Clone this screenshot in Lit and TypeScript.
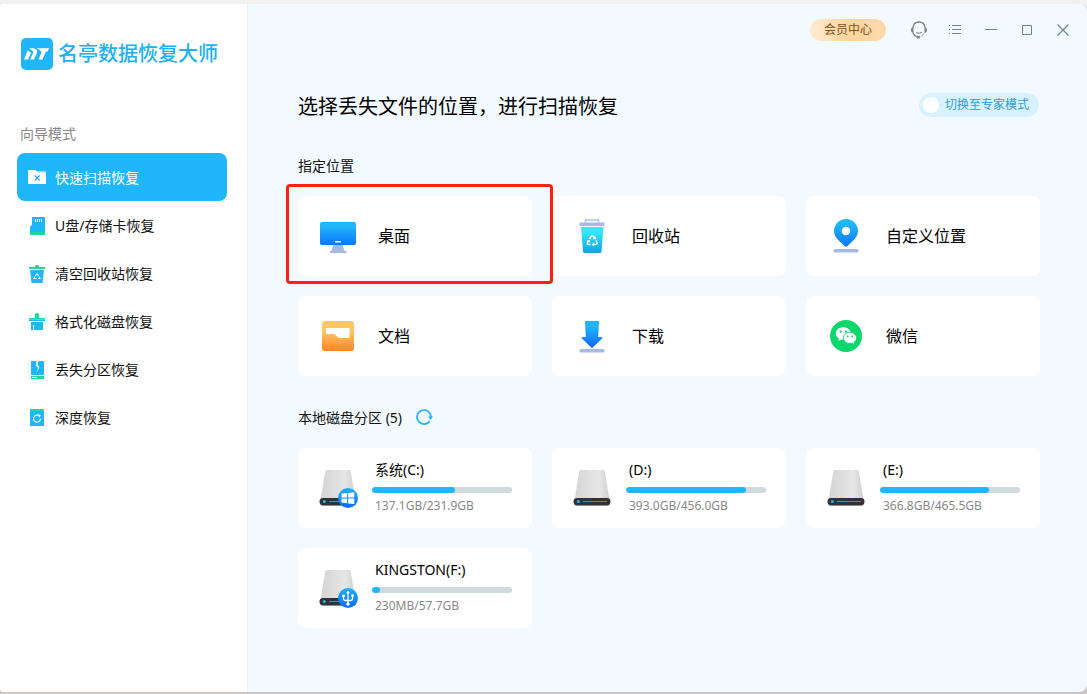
import { LitElement, html, svg, css, nothing } from "lit";
import { customElement, property, state } from "lit/decorators.js";

const logoIcon = html`
  <svg width="32" height="32" viewBox="0 0 32 32" aria-hidden="true">
    <rect width="32" height="32" rx="5" fill="#20b6fc" />
    <path d="M22 22.500L25.500 14H27.800L29 11.300L28.300 10.300L20 14Z" fill="#1590d2" opacity="0.500" />
    <g fill="#fff">
      <path d="M3 21.600L6.800 12.300L10 15L7 21.600Z" />
      <path d="M8 10.300H12.500Q17.200 11.500 15.800 15.300L13 21.600H9.200L12.300 14.600Q12.300 12.600 8 10.300Z" />
      <path d="M15.500 10.300H28.300L26.500 13.800H24.800L21.500 21.600H17.500L20.600 14.300Q19.500 12 15.500 10.300Z" />
    </g>
  </svg>
`;

const navIcons = {
  scan: svg`
    <path d="M9 3h10v4H9z" fill="#8fdafe" />
    <path d="M1 2h7.500l2 2.500H19V16H1z" fill="#fff" />
    <path d="M7.700 7.500l5 5M12.700 7.500l-5 5" stroke="#20a6ee" stroke-width="1.100" />`,
  card: svg`
    <path d="M5 1h12.500a.5.5 0 0 1 .5.5V16H3v-5.500L5 9z" fill="#20b6fc" />
    <path d="M3 16h15v3H3z" fill="#22d69a" />
    <path d="M8.500 3v3M10.500 3v3M12.500 3v3M14.500 3v3" stroke="#fff" stroke-width="1" />`,
  trash: svg`
    <path d="M2 3h6V2q0-1 2-1t2 1v1h6v2H2z" fill="#22d69a" />
    <path d="M3 6h14l-1.500 13h-11z" fill="#20b6fc" />
    <path d="M8.500 12L10 9.700L11.500 12M12.200 12.700L13 14.500H11M9.500 14.500H7L8 12.500" fill="none" stroke="#fff" stroke-width="1.100" />`,
  brush: svg`
    <path d="M8 6V2.500Q8 1 10 1t2 1.500V6h6v1.500H2V6z" fill="#22d69a" />
    <path d="M2 7.500h16V9H2z" fill="#20b6fc" />
    <path d="M4 10h12v8H7v-5H6v5H4z" fill="#20b6fc" />`,
  partition: svg`
    <path d="M4 1h13v14H4z" fill="#20b6fc" />
    <path d="M9.500 1L8.700 5.500L11 7.500L9.800 12.500L12.300 7L10.500 5L11.500 1z" fill="#fff" />
    <path d="M4 16h13v3H4z" fill="#22d69a" />
    <path d="M5 17h5v1H5z" fill="#fff" />`,
  deep: svg`
    <path d="M3 1h14v2H3z" fill="#22d69a" />
    <path d="M3 3h14v15H3z" fill="#20b6fc" />
    <path d="M11.500 7.500A3.500 3.500 0 1 0 13.500 10.800" fill="none" stroke="#fff" stroke-width="1.200" />
    <path d="M11 6L14 7.500L12 9.800z" fill="#fff" />`,
};

const placeIcons = {
  desktop: svg`
    <defs><linearGradient id="g" x2="0" y2="1"><stop offset="0.200" stop-color="#20b6f8" /><stop offset="1" stop-color="#0d74ff" /></linearGradient></defs>
    <path d="M13.500 27h9l2 6h2v2H10v-2h1.500z" fill="#a5b9e2" />
    <rect y="4" width="36" height="23" rx="2" fill="url(#g)" />
    <path d="M15 23h6v1.500h-6z" fill="#fff" />`,
  recycle: svg`
    <defs><linearGradient id="g" x2="0" y2="1"><stop offset="0.200" stop-color="#33e8f8" /><stop offset="1" stop-color="#119fe0" /></linearGradient></defs>
    <path d="M11.500 4.500V2h13v2.500" fill="none" stroke="#b0c1e7" stroke-width="1.600" />
    <rect x="5.500" y="4.500" width="25" height="3.500" rx="1" fill="#a5b9e2" />
    <path d="M7 9h22.500l-2 24.500q-.1 1.500-1.500 1.500H10.500q-1.400 0-1.500-1.500z" fill="url(#g)" />
    <g fill="none" stroke="#fff" stroke-width="1.600" stroke-linejoin="round">
      <path d="M15.500 21L17 18.500Q18.300 17.300 19.600 18.500L20.800 20.800" />
      <path d="M22 22.500L23 24.500Q23.300 26.500 21 26.500H19" />
      <path d="M16.500 26.500H15Q12.800 26.500 13.500 24.500L14.800 22.500" />
    </g>
    <path d="M19.200 21.300h3l-.4-2.700zM19.800 24.600v3.800l-2-1.900zM12.700 22.500l2.900-.6.4 2.700z" fill="#fff" />`,
  pin: svg`
    <defs><linearGradient id="g" x2="0" y2="1"><stop offset="0.200" stop-color="#20b6f8" /><stop offset="1" stop-color="#0d74ff" /></linearGradient></defs>
    <path d="M18 1a12 12 0 0 1 12 12c0 6-5 9.500-10.500 15q-1.500 1.300-3 0C11 22.500 6 19 6 13A12 12 0 0 1 18 1z" fill="url(#g)" />
    <circle cx="18" cy="13" r="4.300" fill="#fff" />
    <rect x="5.500" y="31" width="25" height="3.500" rx="1.500" fill="#a5b9e2" />`,
  documents: svg`
    <defs><linearGradient id="g" x2="0" y2="1"><stop offset="0.350" stop-color="#ffc668" /><stop offset="1" stop-color="#fb861e" /></linearGradient></defs>
    <rect x="2" y="3" width="32" height="30" rx="3" fill="url(#g)" />
    <path d="M7 10h21.500q1 0 1 1v9H19.500q-1 0-2-1l-3-3H6v-5q0-1 1-1z" fill="#fff" />`,
  download: svg`
    <defs><linearGradient id="g" x2="0" y2="1"><stop offset="0.200" stop-color="#20b6f8" /><stop offset="1" stop-color="#0d66ff" /></linearGradient></defs>
    <path d="M12 3h12q1 0 1 1l-.8 15H28l.3 1.200L19 29.300q-1 1-2 0L7.700 20.200L8 19h3.800L11 4q0-1 1-1z" fill="url(#g)" />
    <rect x="5.500" y="31" width="25" height="3.500" rx="1.500" fill="#a5b9e2" />`,
  wechat: svg`
    <circle cx="18" cy="18" r="16" fill="#0bd76b" />
    <path d="M15.300 9.300c4.200 0 7.600 2.700 7.600 6.200s-3.400 6.200-7.600 6.200q-1.200 0-2.300-.3l-2.700 1.500.7-2.400C9 19.400 7.700 17.600 7.700 15.500c0-3.500 3.400-6.200 7.600-6.200z" fill="#fff" />
    <path d="M21.900 14.300c3.700 0 6.600 2.500 6.600 5.600 0 1.800-1 3.300-2.500 4.400l.5 2.100-2.400-1.200q-1 .3-2.200.3c-3.700 0-6.600-2.500-6.600-5.600s2.900-5.600 6.600-5.600z" fill="#fff" stroke="#0bd76b" stroke-width="0.900" />
    <g fill="#0bd76b"><circle cx="12.700" cy="13.700" r="1.100" /><circle cx="17.900" cy="13.700" r="1.100" /><circle cx="19.700" cy="18.400" r="0.900" /><circle cx="24.200" cy="18.400" r="0.900" /></g>`,
};

const driveBadges = {
  windows: svg`
    <path d="M23.500 25.600l5.600-.6v4.600h-5.600zM30.100 24.900l6.200-.7v5.400h-6.200zM23.500 30.600h5.600v4.700l-5.600-.7zM30.100 30.600h6.200v5.500l-6.200-.7z" fill="#fff" />`,
  usb: svg`
    <g fill="none" stroke="#fff" stroke-width="1.300">
      <path d="M30 24v12M25.500 28v2.500q0 2 2 2H30M34.500 28v2.500q0 2-2 2H30" />
    </g>
    <path d="M30 22.500l1.900 2.800h-3.800zM24.200 26.700h2.700v2.300h-2.700z" fill="#fff" />
    <circle cx="34.500" cy="27.700" r="1.400" fill="#fff" />
    <circle cx="30" cy="36" r="1.700" fill="#fff" />`,
};

const driveIcon = (badge?: keyof typeof driveBadges) => html`
  <svg width="42" height="40" viewBox="0 0 42 40" aria-hidden="true">
    <defs>
      <linearGradient id="metal"><stop offset="0" stop-color="#d4d4d4" /><stop offset="0.700" stop-color="#e6e6e6" /><stop offset="1" stop-color="#cfcfcf" /></linearGradient>
      <linearGradient id="disc" x2="0" y2="1"><stop offset="0" stop-color="#20b0fb" /><stop offset="1" stop-color="#0a6cff" /></linearGradient>
    </defs>
    <path d="M9 2h22q1.500 0 1.800 1.500L37.500 32h-35L7.200 3.500Q7.500 2 9 2z" fill="url(#metal)" />
    <rect x="2" y="31" width="36" height="7" rx="3" fill="#8b8f92" />
    <rect x="1.500" y="30" width="37" height="7" rx="3.500" fill="#303235" />
    <circle cx="6.300" cy="33.500" r="1.500" fill="#22b4f5" />
    <path d="M11 33.500h24" stroke="#3795bd" stroke-width="1.100" />
    ${badge
      ? svg`<circle cx="30" cy="30" r="10" fill="url(#disc)" />${driveBadges[badge]}`
      : nothing}
  </svg>
`;

const windowIcons = {
  support: svg`
    <path d="M4 7.500Q4.500 2 10 2t6 5.500M4 13q1.200 3 4.500 4.300" fill="none" stroke="#7d8084" stroke-width="1.300" />
    <path d="M4.500 7v6Q2 13 2 10t2.500-3zM15.500 7v6Q18 13 18 10t-2.500-3z" fill="#7d8084" />
    <path d="M7.300 12.300Q10 14.200 12.700 12.300" fill="none" stroke="#7d8084" stroke-width="1.100" />
    <path d="M7.500 16.200h3.300v2H8.500zM14.800 13.500q-1 2-2.500 2.800" fill="#7d8084" stroke="#7d8084" stroke-width="0.500" />`,
  menu: svg`
    <path d="M7 5.500h9M7 9.500h9M7 13.500h9M4 5.500h1M4 9.500h1M4 13.500h1" stroke="#6f8594" stroke-width="1" />`,
  minimize: svg`<path d="M4 9.500h12" stroke="#6f8594" stroke-width="1" />`,
  maximize: svg`<path d="M5.500 5.500h9v9h-9z" fill="none" stroke="#6f8594" stroke-width="1" />`,
  close: svg`<path d="M4.500 4.500l11 11M15.500 4.500l-11 11" stroke="#6f8594" stroke-width="1.200" />`,
};

const font = css`"Noto Sans", "Noto Sans CJK SC", sans-serif`;

@customElement("side-nav")
class SideNav extends LitElement {
  static styles = css`
    :host { display: block; padding: 34px 20px 20px 17px; box-sizing: border-box; background: #fff; border-right: 1px solid #e9eff3; }
    .brand { display: flex; align-items: center; gap: 5px; padding-left: 4px; height: 32px; color: #20b0f8; font-size: 20px; line-height: 34px; font-weight: 500; white-space: nowrap; }
    .brand svg { flex: none; }
    .mode { margin: 54px 0 9px; padding-left: 3px; color: #888; font-size: 14px; line-height: 20px; font-weight: 400; }
    .list { list-style: none; margin: 0; padding: 0; }
    .item { display: flex; align-items: center; gap: 8px; width: 100%; height: 48px; padding: 2px 10px 0; border: 0; border-radius: 8px; background: none; color: #111; font: 14px/20px ${font}; text-align: left; cursor: pointer; }
    .item[aria-current] { background: #20b6fc; color: #fff; }
  `;

  @state() private current = "scan";

  private items: { id: keyof typeof navIcons; label: string }[] = [
    { id: "scan", label: "快速扫描恢复" },
    { id: "card", label: "U盘/存储卡恢复" },
    { id: "trash", label: "清空回收站恢复" },
    { id: "brush", label: "格式化磁盘恢复" },
    { id: "partition", label: "丢失分区恢复" },
    { id: "deep", label: "深度恢复" },
  ];

  render() {
    return html`
      <div class="brand">${logoIcon}<span>名亭数据恢复大师</span></div>
      <h2 class="mode">向导模式</h2>
      <nav>
        <ul class="list">
          ${this.items.map(
            (item) => html`
              <li>
                <button class="item" aria-current=${this.current === item.id ? "page" : nothing} @click=${() => (this.current = item.id)}>
                  <svg width="20" height="20" viewBox="0 0 20 20" aria-hidden="true">${navIcons[item.id]}</svg>
                  <span>${item.label}</span>
                </button>
              </li>
            `
          )}
        </ul>
      </nav>
    `;
  }
}

@customElement("place-card")
class PlaceCard extends LitElement {
  static styles = css`
    :host { display: block; position: relative; }
    :host([marked]) { z-index: 1; }
    :host([marked])::after { content: ""; position: absolute; inset: -12px -21px -8px -12px; border: 3px solid #ff2015; border-radius: 4px; box-sizing: border-box; pointer-events: none; }
    .card { display: flex; align-items: center; gap: 22px; width: 100%; height: 80px; padding: 0 22px; border: 0; border-radius: 8px; background: #fff; color: #000; font: 16px/24px ${font}; text-align: left; cursor: pointer; }
  `;

  @property() icon: keyof typeof placeIcons = "desktop";
  @property() label = "";

  render() {
    return html`
      <button class="card">
        <svg width="36" height="36" viewBox="0 0 36 36" aria-hidden="true">${placeIcons[this.icon]}</svg>
        <span>${this.label}</span>
      </button>
    `;
  }
}

@customElement("drive-card")
class DriveCard extends LitElement {
  static styles = css`
    :host { display: block; }
    .card { display: flex; align-items: center; gap: 12px; width: 100%; height: 80px; padding: 0 20px; border: 0; border-radius: 8px; background: #fff; color: #000; font: 14px/20px ${font}; text-align: left; cursor: pointer; }
    .card svg { flex: none; }
    .info { display: flex; flex-direction: column; gap: 7px; flex: 1; min-width: 0; padding-bottom: 4px; }
    .name { padding-left: 3px; }
    .track { height: 6px; border-radius: 3px; background: #d0d9dc; overflow: hidden; }
    .fill { display: block; height: 6px; border-radius: 3px; background: #20b6fc; }
    .size { padding-left: 3px; color: #888; font-size: 12px; line-height: 12px; }
  `;

  @property() name = "";
  @property() size = "";
  @property({ type: Number }) used = 0;
  @property() badge?: keyof typeof driveBadges;

  render() {
    return html`
      <button class="card">
        ${driveIcon(this.badge)}
        <span class="info">
          <span class="name">${this.name}</span>
          <span class="track"><span class="fill" style="width:${this.used}%"></span></span>
          <span class="size">${this.size}</span>
        </span>
      </button>
    `;
  }
}

@customElement("app-root")
class AppRoot extends LitElement {
  static styles = css`
    :host { display: block; box-sizing: border-box; min-height: 100vh; padding: 4px 0 2px; background: linear-gradient(#f1f1f1 4px, #c9c6c5 12px); font-family: ${font}; color: #000; }
    .window { display: grid; grid-template-columns: 248px minmax(0, 1fr); min-height: calc(100vh - 6px); border-radius: 4px 8px 8px 4px; overflow: hidden; background: #f2faff; }
    .titlebar { display: flex; align-items: center; justify-content: flex-end; height: 52px; padding-right: 6px; }
    .member { width: 76px; height: 22px; margin-right: 15px; padding: 0; border: 0; border-radius: 11px; background: linear-gradient(90deg, #ffebd2, #fad5a0 50%, #ffdaa9); color: #805215; font: 12px/22px ${font}; cursor: pointer; }
    .tool { display: grid; place-items: center; width: 36px; height: 36px; padding: 0; border: 0; background: none; cursor: pointer; }
    .content { padding: 37px 47px 40px 50px; }
    .head { display: flex; align-items: flex-start; justify-content: space-between; gap: 20px; padding-right: 1px; }
    .title { margin: 0; font-size: 20px; line-height: 28px; font-weight: 400; }
    .expert { display: flex; align-items: center; gap: 6px; height: 24px; padding: 0 10px 0 4px; border-radius: 12px; background: #d7f1fe; color: #2f9dcd; font-size: 12px; line-height: 24px; white-space: nowrap; cursor: pointer; }
    .switch { appearance: none; width: 16px; height: 16px; margin: 0; border-radius: 8px; background: #fff; cursor: pointer; }
    .switch:checked { background: #20b6fc; }
    .section { display: flex; align-items: center; gap: 10px; margin: 35px 0 20px; }
    .grid + .section { gap: 12px; margin-top: 32px; }
    .label { margin: 0; font-size: 14px; line-height: 20px; font-weight: 400; color: #111; }
    .refresh { display: grid; width: 20px; height: 20px; padding: 0; border: 0; background: none; cursor: pointer; }
    .grid { display: grid; grid-template-columns: repeat(3, minmax(0, 1fr)); gap: 20px; }
  `;

  private tools: { id: keyof typeof windowIcons; label: string }[] = [
    { id: "support", label: "客服" },
    { id: "menu", label: "菜单" },
    { id: "minimize", label: "最小化" },
    { id: "maximize", label: "最大化" },
    { id: "close", label: "关闭" },
  ];

  private places = [
    { icon: "desktop", label: "桌面", marked: true },
    { icon: "recycle", label: "回收站" },
    { icon: "pin", label: "自定义位置" },
    { icon: "documents", label: "文档" },
    { icon: "download", label: "下载" },
    { icon: "wechat", label: "微信" },
  ];

  private drives = [
    { name: "系统(C:)", size: "137.1GB/231.9GB", used: 59, badge: "windows" },
    { name: "(D:)", size: "393.0GB/456.0GB", used: 86 },
    { name: "(E:)", size: "366.8GB/465.5GB", used: 78 },
    { name: "KINGSTON(F:)", size: "230MB/57.7GB", used: 6, badge: "usb" },
  ];

  render() {
    return html`
      <div class="window">
        <side-nav></side-nav>
        <main>
          <header class="titlebar">
            <button class="member">会员中心</button>
            ${this.tools.map(
              (t) => html`
                <button class="tool" aria-label=${t.label}>
                  <svg width="20" height="20" viewBox="0 0 20 20" aria-hidden="true">${windowIcons[t.id]}</svg>
                </button>
              `
            )}
          </header>
          <div class="content">
            <div class="head">
              <h1 class="title">选择丢失文件的位置，进行扫描恢复</h1>
              <label class="expert"><input class="switch" type="checkbox" role="switch" />切换至专家模式</label>
            </div>
            <div class="section"><h2 class="label">指定位置</h2></div>
            <div class="grid">
              ${this.places.map(
                (p) => html`<place-card icon=${p.icon} label=${p.label} ?marked=${p.marked}></place-card>`
              )}
            </div>
            <div class="section">
              <h2 class="label">本地磁盘分区 (5)</h2>
              <button class="refresh" aria-label="刷新">
                <svg width="20" height="20" viewBox="0 0 20 20" aria-hidden="true">
                  <path d="M15.800 13A7 7 0 1 1 17 9" fill="none" stroke="#20b6fc" stroke-width="1.600" />
                  <path d="M14 8.500h5L16.500 12z" fill="#20b6fc" />
                </svg>
              </button>
            </div>
            <div class="grid">
              ${this.drives.map(
                (d) => html`<drive-card name=${d.name} size=${d.size} used=${d.used} .badge=${d.badge}></drive-card>`
              )}
            </div>
          </div>
        </main>
      </div>
    `;
  }
}
